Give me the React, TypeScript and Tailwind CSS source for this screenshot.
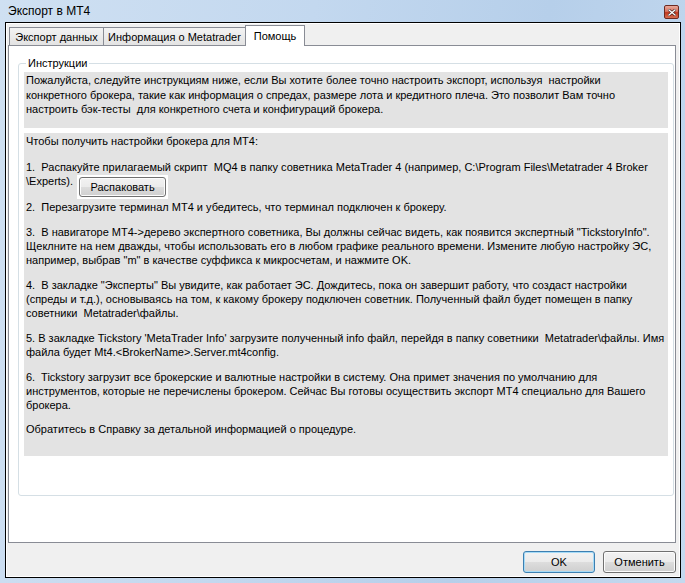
import React from "react";

const font = { fontFamily: '"Liberation Sans", Arial, sans-serif' };

function WinButton({ label, primary = false, className = "" }: { label: string; primary?: boolean; className?: string }) {
  return (
    <button
      className={
        "flex items-center justify-center rounded-[3px] border text-[11px] leading-none text-black " +
        "bg-[linear-gradient(#f2f2f2_0%,#ebebeb_50%,#dddddd_50%,#cfcfcf_100%)] " +
        (primary ? "border-[#3c7fb1] shadow-[inset_0_0_0_1px_#a6dbf7] " : "border-[#707070] shadow-[inset_0_0_0_1px_#fcfcfc] ") +
        className
      }
    >
      {label}
    </button>
  );
}

function Tab({ label, active = false, width }: { label: string; active?: boolean; width: string }) {
  if (active) {
    return (
      <div className={`relative z-10 -mb-px flex h-[21px] items-start justify-center border border-b-0 border-[#898c95] bg-white pt-[3px] text-[11px] leading-[14px] ${width}`}>
        {label}
      </div>
    );
  }
  return (
    <div className={`flex h-[18px] items-center justify-center border border-b-0 border-[#898c95] bg-linear-to-b from-[#f3f3f3] to-[#e3e3e3] text-[11px] leading-[14px] ${width}`}>
      {label}
    </div>
  );
}

export default function App() {
  return (
    <div
      style={font}
      className="flex h-[583px] w-[685px] flex-col bg-[linear-gradient(100deg,#cfe0f2_0%,#c3d8ef_40%,#b6cfea_70%,#c4d9ef_100%)] text-black"
    >
      {/* title bar */}
      <div className="flex h-[22px] items-start justify-between">
        <span className="pl-[8px] pt-[4px] text-[12px] leading-[15px]">Экспорт в MT4</span>
        <div className="mr-[6px] mt-[5px] flex h-[14px] w-[15px] items-center justify-center rounded-[2px] border border-[#6d2a21] bg-[linear-gradient(#e9a99b_0%,#d7725f_45%,#c0391f_55%,#d66c4f_100%)]">
          <svg width="8" height="7" viewBox="0 0 8 7">
            <path d="M1 1 L7 6 M7 1 L1 6" stroke="#3a1510" strokeWidth="2.6" strokeLinecap="square" />
            <path d="M1 1 L7 6 M7 1 L1 6" stroke="#fff" strokeWidth="1.4" strokeLinecap="square" />
          </svg>
        </div>
      </div>

      {/* client frame */}
      <div className="mb-[5px] ml-[5px] mr-[4px] flex flex-1 flex-col border border-black bg-[#f0f0f0] shadow-[inset_0_0_0_1px_#ffffff]">
        <div className="ml-[2px] mr-[4px] mt-[2px] flex flex-1 flex-col">
          {/* tab strip */}
          <div className="flex h-[20px] items-end pl-[1px]">
            <Tab label="Экспорт данных" width="w-[95px]" />
            <Tab label="Информация о Metatrader" width="w-[143px] -ml-px" />
            <Tab label="Помощь" active width="w-[60px] -ml-px" />
          </div>

          {/* tab page */}
          <div className="flex h-[498px] flex-col border border-[#898c95] bg-white pl-[9px] pr-px pt-[17px]">
            <div className="relative h-[433px] rounded-[3px] border border-[#d5dfe5] px-[5px] pt-[8px]">
              <span className="absolute -top-[8px] left-[7px] bg-white px-[2px] text-[11px] leading-[14px]">Инструкции</span>

              <div className="h-[56px] whitespace-pre bg-[#e3e3e3] pl-[2px] pt-px text-[11px] leading-[14.5px]">
                {"Пожалуйста, следуйте инструкциям ниже, если Вы хотите более точно настроить экспорт, используя  настройки\n"}
                {"конкретного брокера, такие как информация о спредах, размере лота и кредитного плеча. Это позволит Вам точно\n"}
                {"настроить бэк-тесты  для конкретного счета и конфигураций брокера."}
              </div>

              <div className="mt-[5px] flex h-[323px] flex-col whitespace-pre bg-[#e3e3e3] pl-[2px] pt-px text-[11px] leading-[14px]">
                <div>Чтобы получить настройки брокера для MT4:</div>

                <div className="mt-[12px]">
                  <div>{"1.  Распакуйте прилагаемый скрипт  MQ4 в папку советника MetaTrader 4 (например, C:\\Program Files\\Metatrader 4 Broker"}</div>
                  <div className="flex items-start">
                    <span>{"\\Experts)."}</span>
                    <div className="ml-[4px] mt-px bg-white p-[2px]">
                      <WinButton label="Распаковать" className="h-[20px] w-[87px]" />
                    </div>
                  </div>
                </div>

                <div className="mt-px">{"2.  Перезагрузите терминал MT4 и убедитесь, что терминал подключен к брокеру."}</div>

                <div className="mt-[11px]">
                  {"3.  В навигаторе MT4->дерево экспертного советника, Вы должны сейчас видеть, как появится экспертный \"TickstoryInfo\".\n"}
                  {"Щеклните на нем дважды, чтобы использовать его в любом графике реального времени. Измените любую настройку ЭС,\n"}
                  {"например, выбрав \"m\" в качестве суффикса к микросчетам, и нажмите OK."}
                </div>

                <div className="mt-[11px]">
                  {"4.  В закладке \"Эксперты\" Вы увидите, как работает ЭС. Дождитесь, пока он завершит работу, что создаст настройки\n"}
                  {"(спреды и т.д.), основываясь на том, к какому брокеру подключен советник. Полученный файл будет помещен в папку\n"}
                  {"советники  Metatrader\\файлы."}
                </div>

                <div className="mt-[11px]">
                  {"5. В закладке Tickstory 'MetaTrader Info' загрузите полученный info файл, перейдя в папку советники  Metatrader\\файлы. Имя\n"}
                  {"файла будет Mt4.<BrokerName>.Server.mt4config."}
                </div>

                <div className="mt-[11px]">
                  {"6.  Tickstory загрузит все брокерские и валютные настройки в систему. Она примет значения по умолчанию для\n"}
                  {"инструментов, которые не перечислены брокером. Сейчас Вы готовы осуществить экспорт MT4 специально для Вашего\n"}
                  {"брокера."}
                </div>

                <div className="mt-[10px]">Обратитесь в Справку за детальной информацией о процедуре.</div>
              </div>
            </div>
          </div>

          {/* bottom buttons */}
          <div className="flex flex-1 items-start justify-end gap-[8px] pt-[8px]">
            <WinButton label="OK" primary className="h-[22px] w-[72px]" />
            <WinButton label="Отменить" className="h-[22px] w-[73px]" />
          </div>
        </div>
      </div>
    </div>
  );
}
